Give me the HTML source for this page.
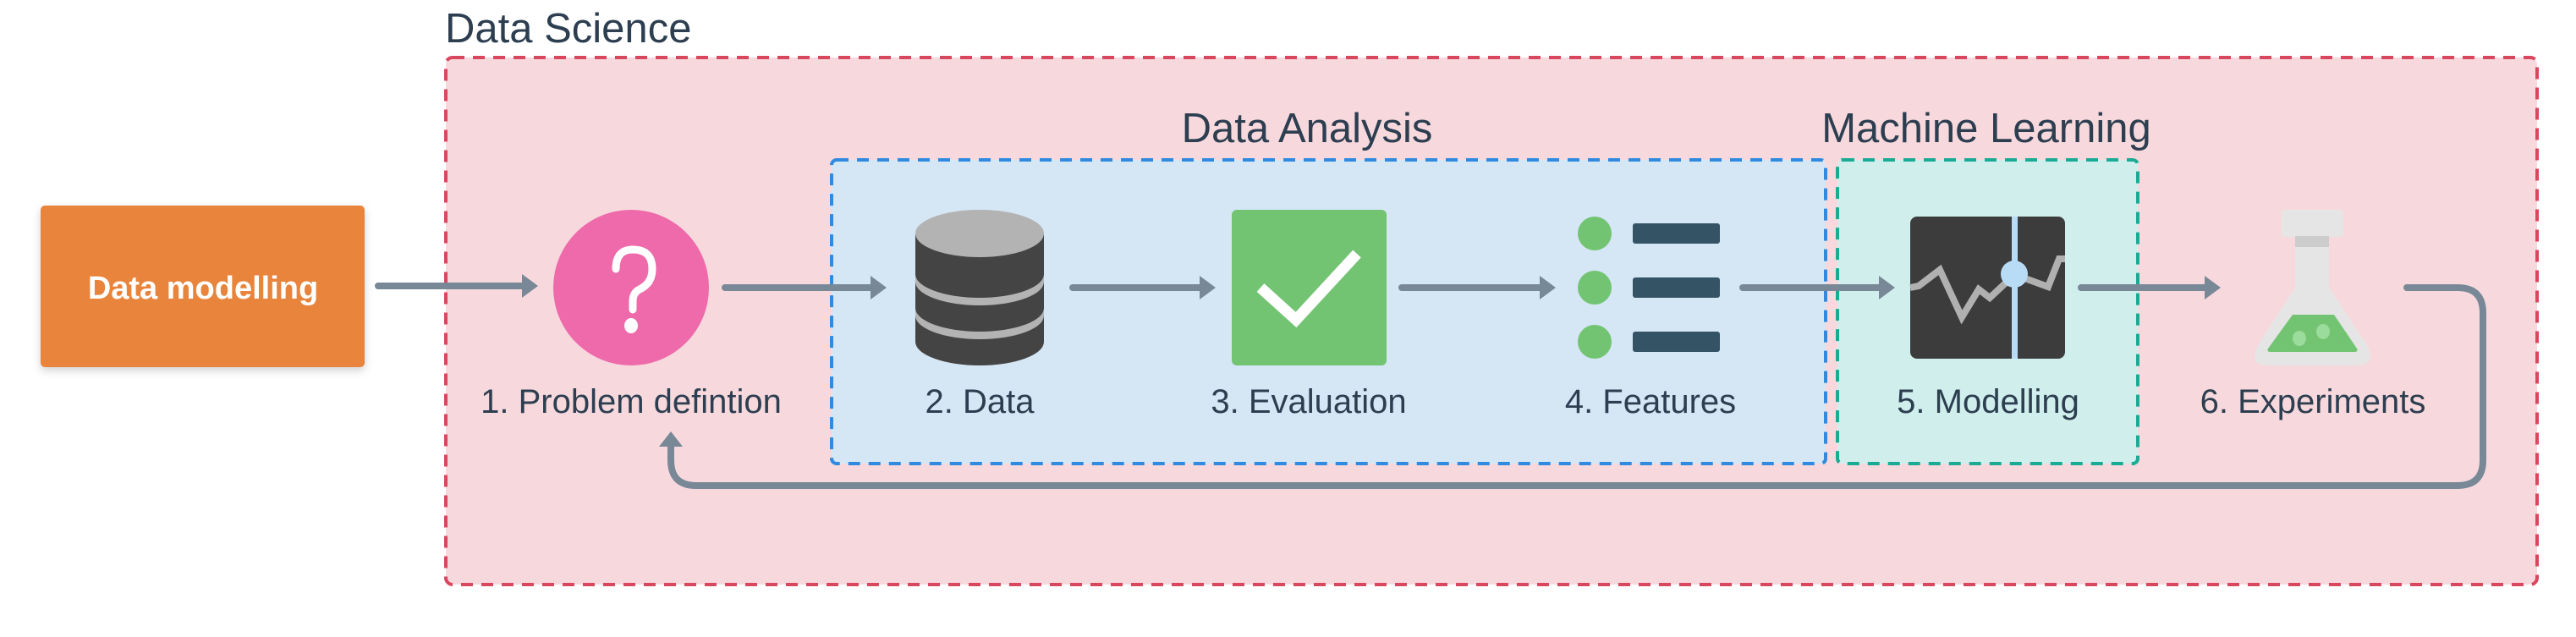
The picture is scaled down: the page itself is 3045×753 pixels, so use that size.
<!DOCTYPE html>
<html><head><meta charset="utf-8"><style>
html,body{margin:0;padding:0;background:#fff;}
svg{display:block;}
text{font-family:"Liberation Sans",sans-serif;fill:#2c3e50;}
</style></head><body>
<svg width="3045" height="753" viewBox="0 0 3045 753" xmlns="http://www.w3.org/2000/svg">
<defs>
<filter id="sh" x="-10%" y="-10%" width="130%" height="140%"><feDropShadow dx="0" dy="4" stdDeviation="5" flood-color="#000" flood-opacity="0.18"/></filter>
</defs>
<rect x="527" y="68" width="2472" height="623" rx="8" fill="#f7d9dd" stroke="#d9475e" stroke-width="4" stroke-dasharray="14 10"/>
<text x="526" y="50" font-size="49">Data Science</text>
<rect x="983" y="189" width="1175" height="359" rx="6" fill="#d5e6f5" stroke="#2f8ae0" stroke-width="4" stroke-dasharray="14 10"/>
<text x="1545" y="168" font-size="49" text-anchor="middle">Data Analysis</text>
<rect x="2172" y="189" width="355" height="359" rx="6" fill="#d0efec" stroke="#1aab95" stroke-width="4" stroke-dasharray="14 10"/>
<text x="2348" y="168" font-size="49" text-anchor="middle">Machine Learning</text>

<rect x="48" y="243" width="383" height="191" rx="5" fill="#e8843b" filter="url(#sh)"/>
<text x="240" y="353" font-size="38" font-weight="bold" text-anchor="middle" style="fill:#fff">Data modelling</text>

<g stroke="#788896" stroke-width="8" stroke-linecap="round" fill="none">
<line x1="447" y1="338" x2="625" y2="338"/>
<line x1="857" y1="340" x2="1037" y2="340"/>
<line x1="1268" y1="340" x2="1426" y2="340"/>
<line x1="1657" y1="340" x2="1828" y2="340"/>
<line x1="2060" y1="340" x2="2229" y2="340"/>
<line x1="2460" y1="340" x2="2614" y2="340"/>
<path d="M2845 340 H2905 Q2935 340 2935 370 V544 Q2935 574 2905 574 H823 Q793 574 793 544 V525"/>
</g>
<g fill="#788896">
<path d="M617 324 L636 338 L617 352 Z"/>
<path d="M1029 326 L1048 340 L1029 354 Z"/>
<path d="M1418 326 L1437 340 L1418 354 Z"/>
<path d="M1820 326 L1839 340 L1820 354 Z"/>
<path d="M2221 326 L2240 340 L2221 354 Z"/>
<path d="M2606 326 L2625 340 L2606 354 Z"/>
<path d="M779 528 L793 510 L807 528 Z"/>
</g>

<circle cx="746" cy="340" r="92" fill="#ee6aaa"/>
<path d="M728 318 Q728 295 748 295 Q771 295 771 318 Q771 335 756 342 Q748 346 748 356 V366" stroke="#fff" stroke-width="9" fill="none" stroke-linecap="round"/>
<ellipse cx="746" cy="385" rx="8" ry="9" fill="#fff"/>
<text x="746" y="488" font-size="40" text-anchor="middle">1. Problem defintion</text>

<path d="M1082 276 V404 A76 28 0 0 0 1234 404 V276 Z" fill="#444"/>
<path d="M1082 324 A76 28 0 0 0 1234 324 V333 A76 28 0 0 1 1082 333 Z" fill="#b3b3b3"/>
<path d="M1082 364 A76 28 0 0 0 1234 364 V373 A76 28 0 0 1 1082 373 Z" fill="#b3b3b3"/>
<ellipse cx="1158" cy="276" rx="76" ry="28" fill="#b3b3b3"/>
<text x="1158" y="488" font-size="40" text-anchor="middle">2. Data</text>

<rect x="1456" y="248" width="183" height="184" rx="6" fill="#72c472"/>
<path d="M1490 340 L1532 378 L1604 300" stroke="#fff" stroke-width="13" fill="none"/>
<text x="1547" y="488" font-size="40" text-anchor="middle">3. Evaluation</text>

<g fill="#72c472"><circle cx="1885" cy="276" r="20"/><circle cx="1885" cy="340" r="20"/><circle cx="1885" cy="404" r="20"/></g>
<g fill="#345466"><rect x="1930" y="264" width="103" height="24" rx="3"/><rect x="1930" y="328" width="103" height="24" rx="3"/><rect x="1930" y="392" width="103" height="24" rx="3"/></g>
<text x="1951" y="488" font-size="40" text-anchor="middle">4. Features</text>

<rect x="2258" y="256" width="183" height="168" rx="8" fill="#3c3c3c"/>
<polyline points="2258,340 2268,338 2293,319 2319,375 2339,342 2352,352 2381,325 2399,331 2421,339 2434,306 2441,306" stroke="#b0b0b0" stroke-width="8" fill="none" stroke-linejoin="miter"/>
<rect x="2378" y="256" width="7" height="168" fill="#b9dcf6"/>
<ellipse cx="2381" cy="324" rx="16" ry="16" fill="#b9dcf6"/>
<text x="2350" y="488" font-size="40" text-anchor="middle">5. Modelling</text>

<rect x="2697" y="248" width="73" height="32" rx="4" fill="#e5e5e5"/>
<rect x="2713" y="279" width="40" height="13" fill="#cccccc"/>
<path d="M2713 292 H2753 V340 L2796 405 Q2812 432 2785 432 H2682 Q2655 432 2671 405 L2713 340 Z" fill="#e5e5e5"/>
<path d="M2710 372 H2759 L2786 412 Q2788 416 2783 416 H2684 Q2679 416 2681 412 Z" fill="#72c472"/>
<ellipse cx="2718" cy="400" rx="8" ry="9" fill="#9bdb9b"/>
<ellipse cx="2746" cy="392" rx="8" ry="9" fill="#9bdb9b"/>
<text x="2734" y="488" font-size="40" text-anchor="middle">6. Experiments</text>
</svg>
</body></html>
